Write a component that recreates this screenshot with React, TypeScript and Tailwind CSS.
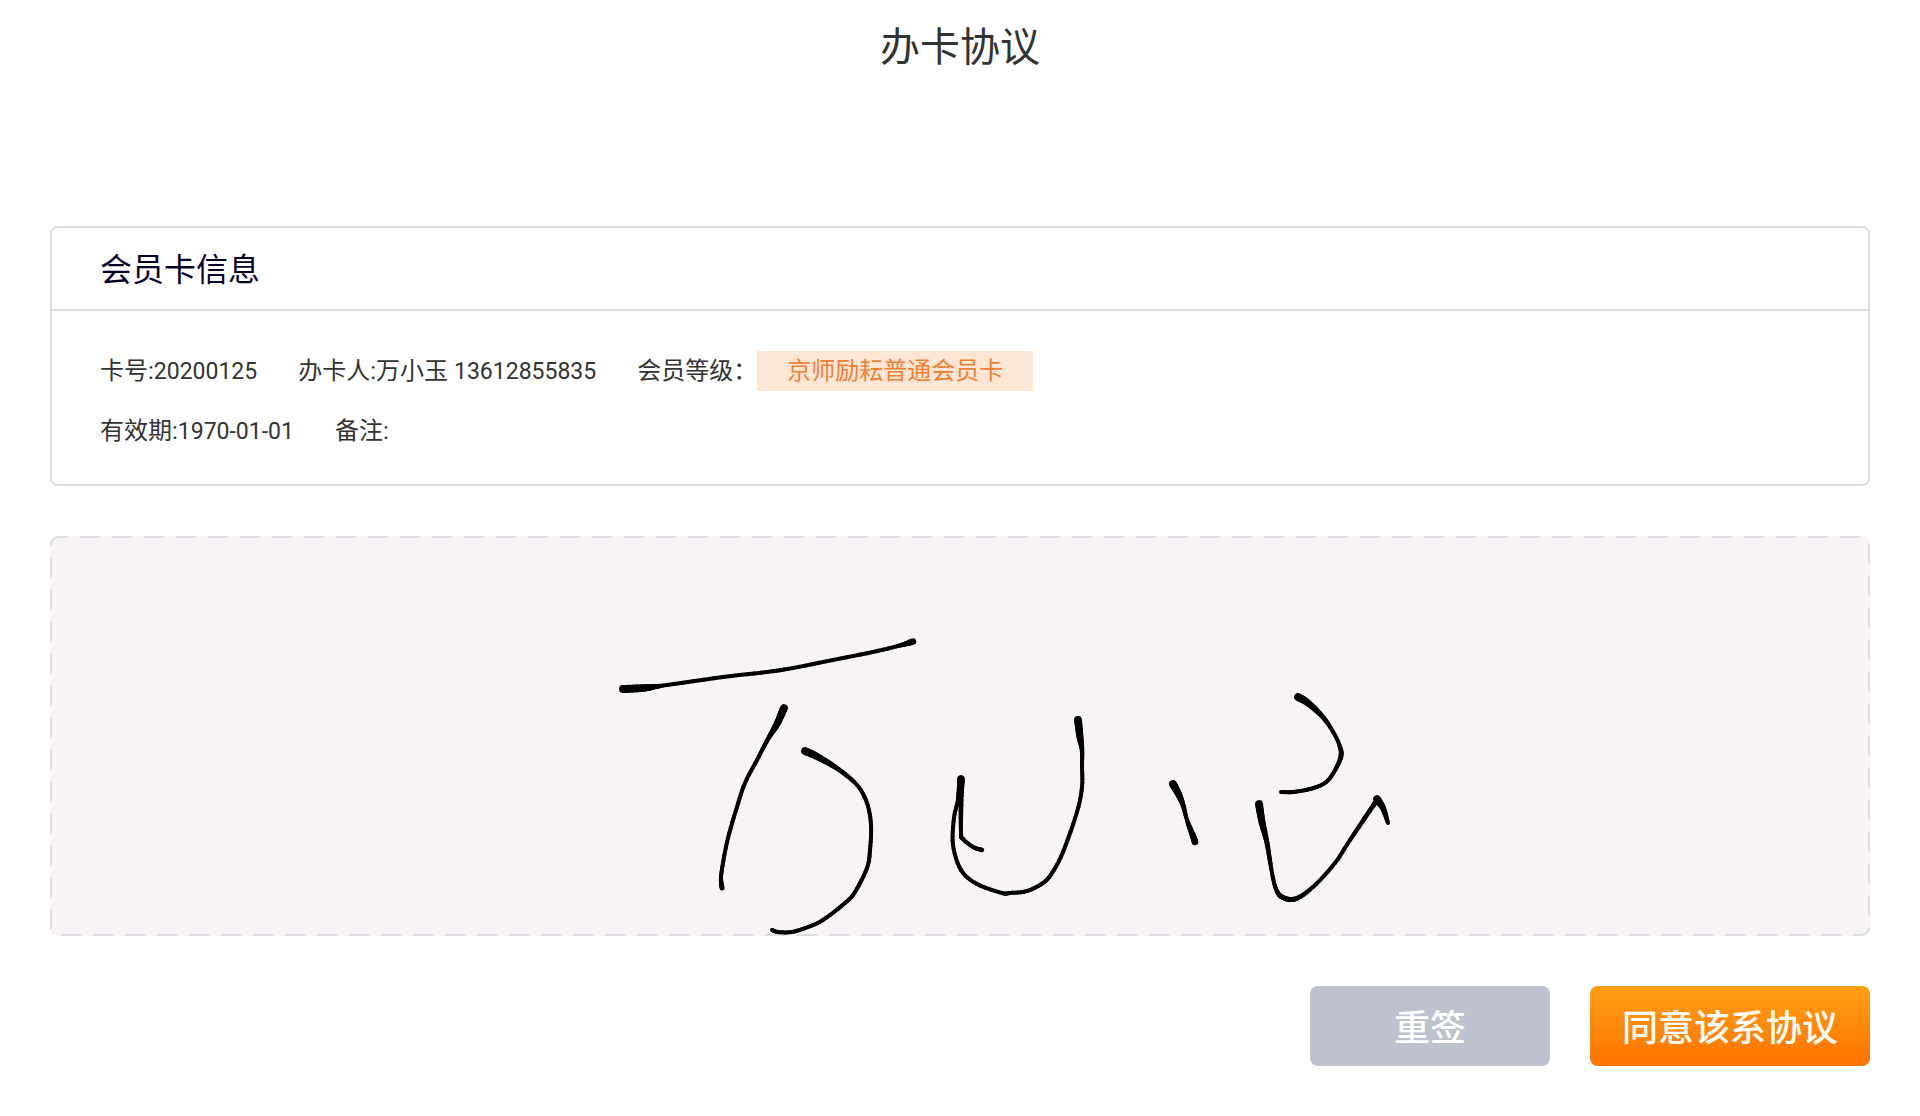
import React from 'react';

type Point = [x: number, y: number, width: number];

interface MemberCard {
  cardNo: string;
  holder: string;
  phone: string;
  level: string;
  validUntil: string;
  remark: string;
}

const card: MemberCard = {
  cardNo: '20200125',
  holder: '万小玉',
  phone: '13612855835',
  level: '京师励耘普通会员卡',
  validUntil: '1970-01-01',
  remark: '',
};

// Pen strokes on the 1820x400 pad, each point holds x, y and pen width
const strokes: Point[][] = [
  [[573, 153, 8], [594, 152, 7.5], [606, 150.5, 5], [617, 149, 4], [673, 141, 4], [717, 136, 4], [743, 132, 4], [783, 124, 4], [823, 116, 4], [850, 109.5, 4], [863, 105.5, 6.5]],
  [[734, 172, 8], [727, 188, 7], [718, 203, 4.5], [707, 224, 4], [695, 247, 4], [687, 271, 4], [678, 302, 4], [673, 327, 4], [671, 342, 4], [672, 352, 5]],
  [[755, 215, 8], [768, 221, 7], [788, 233, 5], [807, 249, 4], [817, 267, 4], [821, 289, 4], [820, 314, 4], [817, 332, 4], [805, 356, 4], [795, 367, 4], [773, 384, 4], [758, 391, 4], [742, 396, 4], [728, 396, 4], [722, 394, 4]],
  [[911, 243, 8], [911, 264, 5], [911, 297, 4], [913, 303, 4], [923, 311, 4], [932, 314, 4.5]],
  [[1028, 184, 8], [1030, 201, 7], [1032, 214, 4.5], [1032, 229, 4], [1032, 251, 4], [1027, 276, 4], [1013, 316, 4], [1002, 337, 4], [993, 347, 4], [977, 355, 4], [960, 357, 4], [952, 357, 4], [927, 348, 4], [911, 334, 4], [903, 309, 4], [904, 282, 4], [908, 264, 4], [911, 243, 7]],
  [[1123, 248, 8], [1128, 257, 7], [1133, 269, 5], [1137, 284, 4], [1143, 300, 6], [1145, 306, 6.5]],
  [[1248, 161, 8], [1258, 167, 7], [1272, 180, 5], [1282, 194, 4], [1289, 208, 4], [1291, 220, 5], [1284, 236, 4], [1275, 247, 4], [1260, 253, 4], [1243, 256, 4], [1231, 256, 4]],
  [[1209, 268, 8], [1212, 286, 7], [1217, 307, 5], [1222, 337, 4], [1226, 353, 4], [1232, 361, 5], [1245, 363, 5], [1263, 351, 4], [1285, 327, 4], [1300, 304, 4], [1327, 264, 5]],
  [[1327, 263, 8], [1333, 272, 6], [1338, 287, 4]],
];

const STEPS = 6;

const spline = (a: number, b: number, c: number, d: number, t: number) =>
  0.5 * (2 * b + (c - a) * t + (2 * a - 5 * b + 4 * c - d) * t * t + (3 * b - a - 3 * c + d) * t * t * t);

const smooth = (points: Point[]): Point[] => {
  const result: Point[] = [points[0]];
  for (let i = 0; i < points.length - 1; i++) {
    const p0 = points[Math.max(i - 1, 0)];
    const p1 = points[i];
    const p2 = points[i + 1];
    const p3 = points[Math.min(i + 2, points.length - 1)];
    for (let s = 1; s <= STEPS; s++) {
      const t = s / STEPS;
      result.push([
        spline(p0[0], p1[0], p2[0], p3[0], t),
        spline(p0[1], p1[1], p2[1], p3[1], t),
        p1[2] + (p2[2] - p1[2]) * t,
      ]);
    }
  }
  return result;
};

const Stroke: React.FC<{ points: Point[] }> = ({ points }) => {
  const line = smooth(points);
  return (
    <g>
      {line.slice(1).map(([x, y, width], i) => (
        <line key={i} x1={line[i][0]} y1={line[i][1]} x2={x} y2={y} strokeWidth={width} />
      ))}
    </g>
  );
};

const SignaturePad: React.FC = () => (
  <section aria-label="签名" className="relative mt-[50px] h-[400px] rounded-lg bg-[#f7f3f7]">
    {/* Dashed outline */}
    <svg className="absolute inset-px h-[calc(100%-2px)] w-[calc(100%-2px)] overflow-visible" aria-hidden="true">
      <rect
        width="100%"
        height="100%"
        rx="8"
        fill="none"
        stroke="#dddce0"
        strokeWidth="2"
        strokeDasharray="20 12"
        strokeDashoffset="-21"
      />
    </svg>
    <svg viewBox="0 0 1820 400" className="absolute inset-0 h-full w-full" stroke="#000" strokeLinecap="round">
      {strokes.map((points, i) => (
        <Stroke key={i} points={points} />
      ))}
    </svg>
  </section>
);

const Digits: React.FC<{ children: React.ReactNode }> = ({ children }) => (
  <span className="text-[23px] leading-none">{children}</span>
);

const CardInfo: React.FC<{ card: MemberCard }> = ({ card }) => (
  <section className="rounded-lg border-2 border-[#dddddd]">
    <h2 className="border-b-2 border-[#dddddd] px-12 pt-[18px] pb-[15px] text-[32px] leading-[48px] text-[#050028]">
      会员卡信息
    </h2>
    <div className="flex flex-col gap-5 px-12 pt-10 pb-[33px] text-2xl leading-10">
      <div className="flex flex-wrap gap-x-[41px]">
        <span>
          卡号:<Digits>{card.cardNo}</Digits>
        </span>
        <span>
          办卡人:{card.holder} <Digits>{card.phone}</Digits>
        </span>
        <div className="flex">
          <span>会员等级：</span>
          <span className="bg-[#fee6d5] px-[30px] text-[#ee8033]">{card.level}</span>
        </div>
      </div>
      <div className="flex flex-wrap gap-x-[41px]">
        <span>
          有效期:<Digits>{card.validUntil}</Digits>
        </span>
        <span>备注:{card.remark}</span>
      </div>
    </div>
  </section>
);

const App: React.FC = () => {
  return (
    <div className="min-h-screen bg-white px-[50px] pb-[50px] font-[Roboto,'Noto_Sans_CJK_SC',sans-serif] text-[#333333]">
      <header className="flex h-24 items-center justify-center">
        <h1 className="text-[40px] leading-[60px]">办卡协议</h1>
      </header>

      <main className="pt-[130px]">
        <CardInfo card={card} />
        <SignaturePad />
        <div className="mt-[50px] flex justify-end gap-10 text-4xl font-medium text-white">
          <button type="button" className="h-20 w-60 rounded-lg bg-[#bec2ce] pt-1.5">
            重签
          </button>
          <button type="button" className="h-20 w-70 rounded-lg bg-linear-to-b from-[#ff9f14] to-[#ff7200] pt-1.5">
            同意该系协议
          </button>
        </div>
      </main>
    </div>
  );
};

export default App;
